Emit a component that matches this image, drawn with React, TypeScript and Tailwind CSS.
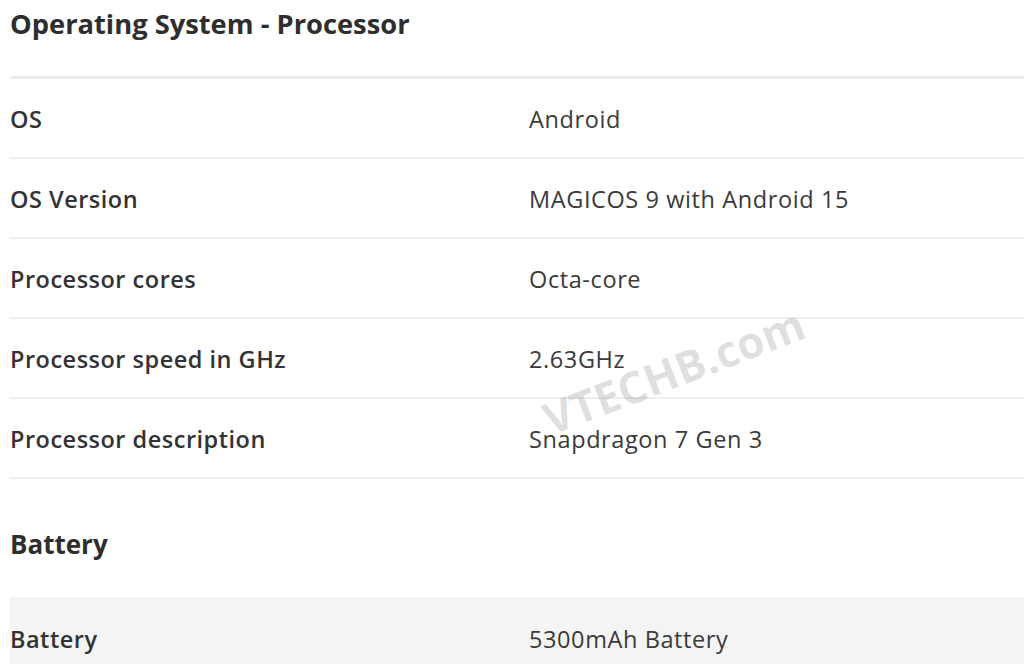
import React from "react";

const rows: [string, string][] = [
  ["OS", "Android"],
  ["OS Version", "MAGICOS 9 with Android 15"],
  ["Processor cores", "Octa-core"],
  ["Processor speed in GHz", "2.63GHz"],
  ["Processor description", "Snapdragon 7 Gen 3"],
];

export default function App() {
  return (
    <div
      className="relative w-[1024px] h-[664px] overflow-hidden bg-white text-[#333]"
      style={{ fontFamily: "'Open Sans', 'Noto Sans', sans-serif" }}
    >
      <div className="pl-[10px]">
        <div className="h-[76px] flex items-start pt-[6px]">
          <h2 className="text-[27.3px] font-bold leading-[36px] text-[#2e2e2e]">
            Operating System - Processor
          </h2>
        </div>
        <div className="border-t-[3px] border-[#ececec]">
          {rows.map(([k, v]) => (
            <div
              key={k}
              className="h-[80px] flex items-center pt-[3px] border-b-2 border-[#efefef]"
            >
              <div className="w-[519px] text-[23.5px] font-semibold text-[#333] tracking-[0.5px]">{k}</div>
              <div className="text-[23.5px] text-[#3a3a3a] tracking-[0.6px]">{v}</div>
            </div>
          ))}
        </div>
        <div className="h-[118px] flex items-center pb-[2px] pt-[14px]">
          <h2 className="text-[26px] font-bold text-[#2e2e2e]">Battery</h2>
        </div>
        <div className="h-[80px] flex items-center bg-[#f4f4f4]">
          <div className="w-[519px] text-[23.5px] font-semibold text-[#333] pt-[5px] tracking-[0.5px]">Battery</div>
          <div className="text-[23.5px] text-[#3a3a3a] pt-[5px] tracking-[0.6px]">5300mAh Battery</div>
        </div>
      </div>
      <div className="absolute left-[545px] top-[398px] -rotate-[21deg] origin-left text-[44px] font-bold text-black/[0.13] leading-none pointer-events-none">
        VTECHB.com
      </div>
    </div>
  );
}
